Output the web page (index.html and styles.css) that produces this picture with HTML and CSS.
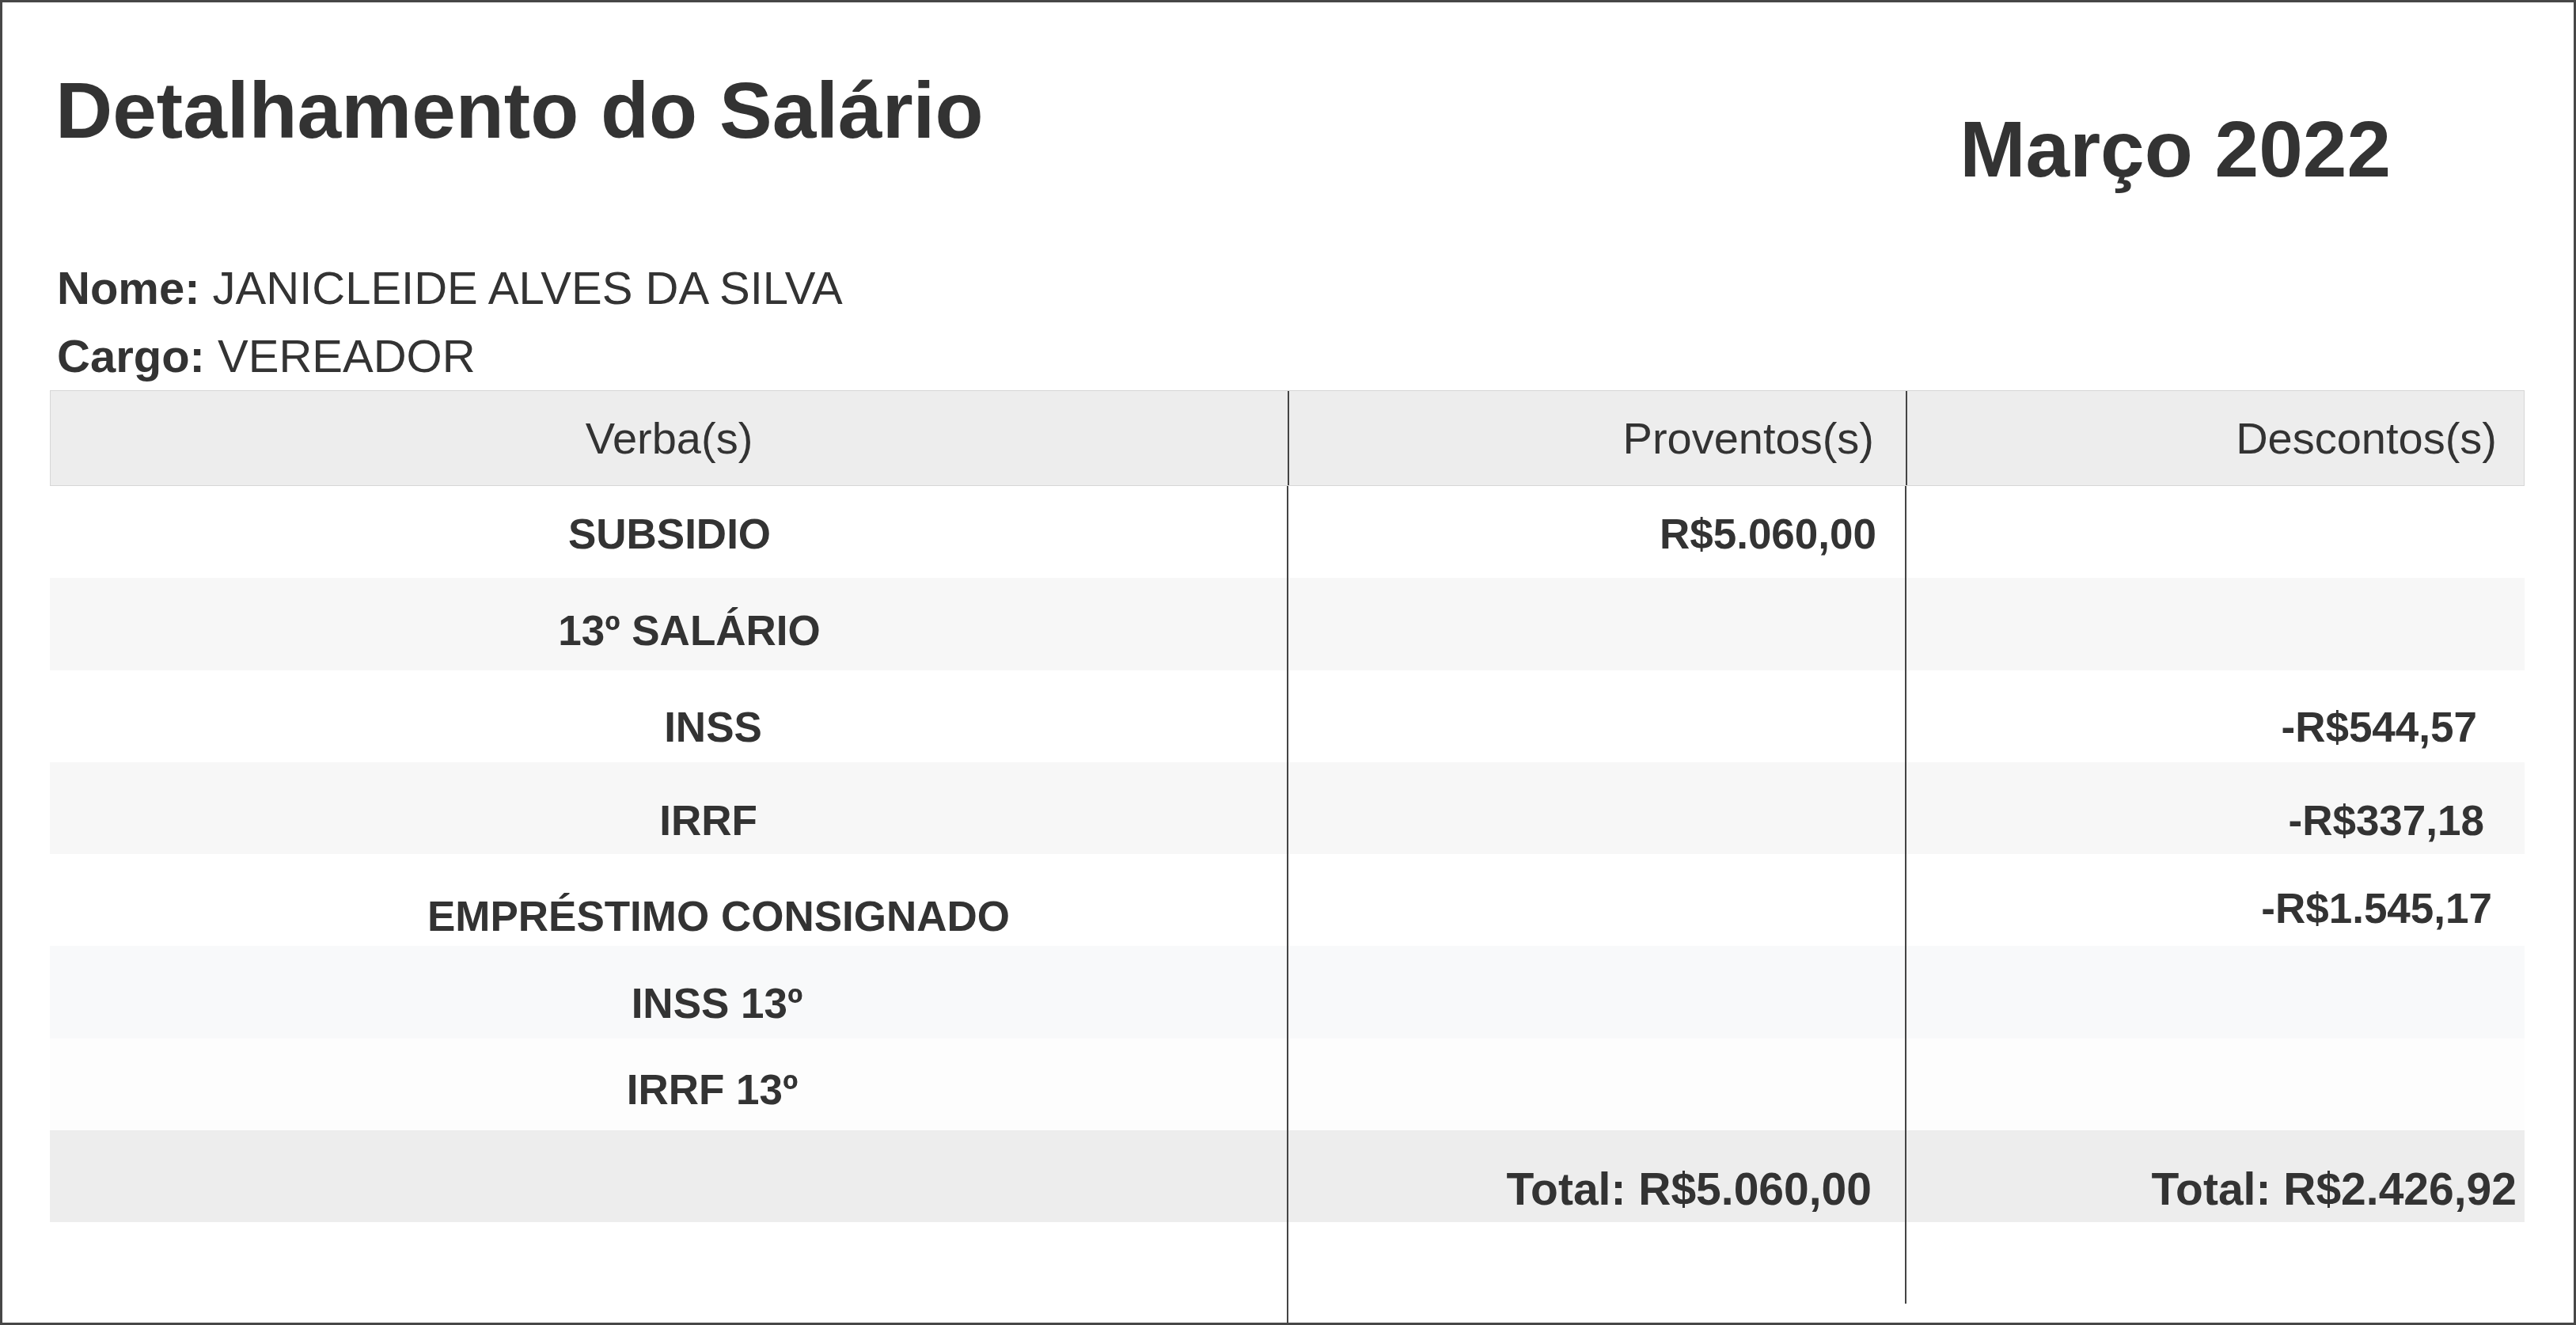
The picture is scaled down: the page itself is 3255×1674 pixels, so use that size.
FILE: index.html
```html
<!DOCTYPE html>
<html lang="pt-BR">
<head>
<meta charset="utf-8">
<title>Detalhamento do Salário</title>
<link rel="stylesheet" href="styles.css">
</head>
<body>
<div class="page">
  <div class="top">
    <h1 class="title">Detalhamento do Salário</h1>
    <h2 class="period">Março 2022</h2>
  </div>
  <div class="info">
    <p class="info-line"><strong>Nome:</strong> JANICLEIDE ALVES DA SILVA</p>
    <p class="info-line"><strong>Cargo:</strong> VEREADOR</p>
  </div>
  <div class="table">
    <div class="row head">
      <div class="cell verba">Verba(s)</div>
      <div class="cell prov">Proventos(s)</div>
      <div class="cell desc">Descontos(s)</div>
    </div>
    <div class="row r1">
      <div class="cell verba">SUBSIDIO</div>
      <div class="cell prov">R$5.060,00</div>
      <div class="cell desc"></div>
    </div>
    <div class="row r2">
      <div class="cell verba">13º SALÁRIO</div>
      <div class="cell prov"></div>
      <div class="cell desc"></div>
    </div>
    <div class="row r3">
      <div class="cell verba">INSS</div>
      <div class="cell prov"></div>
      <div class="cell desc">-R$544,57</div>
    </div>
    <div class="row r4">
      <div class="cell verba">IRRF</div>
      <div class="cell prov"></div>
      <div class="cell desc">-R$337,18</div>
    </div>
    <div class="row r5">
      <div class="cell verba">EMPRÉSTIMO CONSIGNADO</div>
      <div class="cell prov"></div>
      <div class="cell desc">-R$1.545,17</div>
    </div>
    <div class="row r6">
      <div class="cell verba">INSS 13º</div>
      <div class="cell prov"></div>
      <div class="cell desc"></div>
    </div>
    <div class="row r7">
      <div class="cell verba">IRRF 13º</div>
      <div class="cell prov"></div>
      <div class="cell desc"></div>
    </div>
    <div class="row total">
      <div class="cell verba"></div>
      <div class="cell prov">Total: R$5.060,00</div>
      <div class="cell desc">Total: R$2.426,92</div>
    </div>
    <div class="row filler">
      <div class="cell verba"></div>
      <div class="cell prov"></div>
      <div class="cell desc"></div>
    </div>
  </div>
</div>
</body>
</html>
```

FILE: styles.css
```css
html, body {
  margin: 0;
  padding: 0;
  background: #ffffff;
}

body {
  font-family: "Liberation Sans", Arial, sans-serif;
  color: #333333;
}

.page {
  box-sizing: border-box;
  width: 3255px;
  height: 1674px;
  border: 3px solid #474747;
  padding: 86px 62px 0 60px;
  display: flex;
  flex-direction: column;
}

/* ---------- heading ---------- */
.top {
  display: flex;
  justify-content: space-between;
  align-items: flex-start;
  padding-left: 7px;
  flex: none;
}

.title,
.period {
  margin: 0;
  font-size: 100px;
  line-height: 100px;
  font-weight: 700;
  color: #333333;
}

.period {
  margin: 49px 169px 0 0;
}

.info {
  margin-top: 83px;
  padding-left: 9px;
  flex: none;
}

.info-line {
  margin: 0;
  font-size: 58px;
  line-height: 86px;
  white-space: nowrap;
}

.info-line strong {
  font-weight: 700;
}

/* ---------- table ---------- */
.table {
  flex: 1;
  display: flex;
  flex-direction: column;
}

.row {
  display: grid;
  grid-template-columns: 1563px 781px 1fr;
  height: 116.3px;
  flex: none;
}

.cell {
  box-sizing: border-box;
  font-size: 53px;
  line-height: 53px;
  font-weight: 700;
  white-space: nowrap;
}

.verba {
  text-align: center;
}

.prov,
.desc {
  border-left: 2px solid #444444;
  text-align: right;
}

.prov {
  padding-right: 36px;
}

/* header */
.head {
  box-sizing: border-box;
  height: 121px;
  border: 1px solid #d6d6d6;
  background: #ededed;
}

.head .cell {
  font-size: 56px;
  line-height: 56px;
  font-weight: 400;
  padding-top: 32px;
}

.head .prov {
  padding-right: 40px;
}

.head .desc {
  padding-right: 34px;
}

/* body rows */
.r1 .cell { padding-top: 34px; }
.r1 .verba { padding-left: 3px; }

.r2 { background: #f7f7f7; }
.r2 .cell { padding-top: 40px; }
.r2 .verba { padding-left: 53px; }

.r3 .cell { padding-top: 45px; }
.r3 .verba { padding-left: 113px; }
.r3 .desc { padding-right: 60px; }

.r4 { background: #f7f7f7; }
.r4 .cell { padding-top: 47px; }
.r4 .verba { padding-left: 101px; }
.r4 .desc { padding-right: 51px; }

.r5 .cell { padding-top: 52px; }
.r5 .verba { padding-left: 127px; }
.r5 .desc { padding-top: 42px; padding-right: 41px; }

.r6 { background: #f8f9fa; }
.r6 .cell { padding-top: 46px; }
.r6 .verba { padding-left: 123px; }

.r7 { background: #fdfdfd; }
.r7 .cell { padding-top: 38px; }
.r7 .verba { padding-left: 111px; }

/* totals */
.total { background: #ededed; }

.total .cell {
  font-size: 57px;
  line-height: 57px;
  padding-top: 46px;
}

.total .prov { padding-right: 42px; }
.total .desc { padding-right: 10px; }

/* column rules running to the bottom of the sheet */
.filler {
  flex: 1;
  height: auto;
}

.filler .desc {
  margin-bottom: 24px;
}
```
